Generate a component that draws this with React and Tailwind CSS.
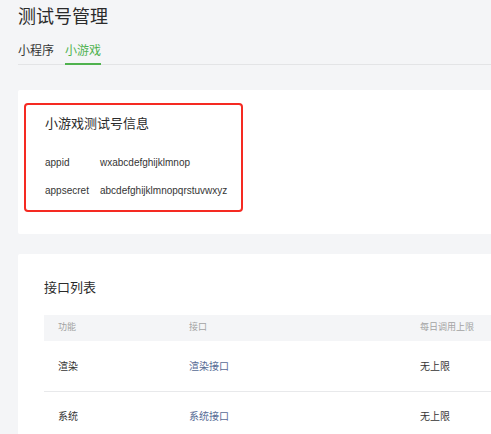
const rows = [
  { name: "渲染", api: "渲染接口", limit: "无上限" },
  { name: "系统", api: "系统接口", limit: "无上限" },
];

const App = () => {
  return (
    <div
      className="h-[434px] w-[491px] overflow-hidden bg-[#f4f5f7] text-[#353535]"
      style={{ fontFamily: '"Liberation Sans", "Noto Sans CJK SC", sans-serif' }}
    >
      <div className="pl-[18px]">
        <h1 className="pt-[4px] text-[18px] leading-[26px] font-normal text-[#2b2b2b]">
          测试号管理
        </h1>

        {/* Tabs */}
        <div className="mt-[12px] flex w-[520px] gap-[11px] border-b border-[#e3e4e6] text-[12px] leading-[19px]">
          <div className="pb-[3px] text-[#353535]">小程序</div>
          <div className="-mb-px border-b-2 border-[#4fb24f] pb-[2px] text-[#4fb24f]">
            小游戏
          </div>
        </div>

        {/* Test account info */}
        <div className="mt-[25px] h-[144px] w-[520px] rounded-[2px] bg-white pl-[6px] pt-[13px]">
          <div className="w-[219px] rounded-[4px] border-2 border-[#f52a22] pl-[19px] pr-[8px] pt-[9px] pb-[5px]">
            <h2 className="text-[13px] leading-5 font-normal text-[#2b2b2b]">
              小游戏测试号信息
            </h2>
            <div className="mt-[15px] text-[10px] leading-[28px] text-[#353535]">
              <div className="flex whitespace-nowrap">
                <span className="w-[55px] shrink-0">appid</span>
                <span>wxabcdefghijklmnop</span>
              </div>
              <div className="flex whitespace-nowrap">
                <span className="w-[55px] shrink-0">appsecret</span>
                <span>abcdefghijklmnopqrstuvwxyz</span>
              </div>
            </div>
          </div>
        </div>

        {/* API list */}
        <div className="mt-[20px] w-[520px] rounded-[2px] bg-white pl-[26px] pt-[24px] pb-4">
          <h2 className="text-[13px] leading-5 font-normal text-[#2b2b2b]">接口列表</h2>
          <div className="mt-[17px]">
            <div className="flex h-[26px] items-center bg-[#f4f5f7] text-[9px] text-[#a3a3a3]">
              <div className="w-[131px] pl-[14px]">功能</div>
              <div className="w-[231px] pl-[14px]">接口</div>
              <div className="pl-[14px]">每日调用上限</div>
            </div>
            {rows.map((r, i) => (
              <div
                key={r.name}
                className={`flex h-[50px] items-center text-[10px] ${
                  i > 0 ? "border-t border-[#e8e9eb]" : ""
                }`}
              >
                <div className="w-[131px] pl-[14px] text-[#353535]">{r.name}</div>
                <div className="w-[231px] pl-[14px] text-[#576b95]">{r.api}</div>
                <div className="pl-[14px] text-[#353535]">{r.limit}</div>
              </div>
            ))}
          </div>
        </div>
      </div>
    </div>
  );
};

export default App;
